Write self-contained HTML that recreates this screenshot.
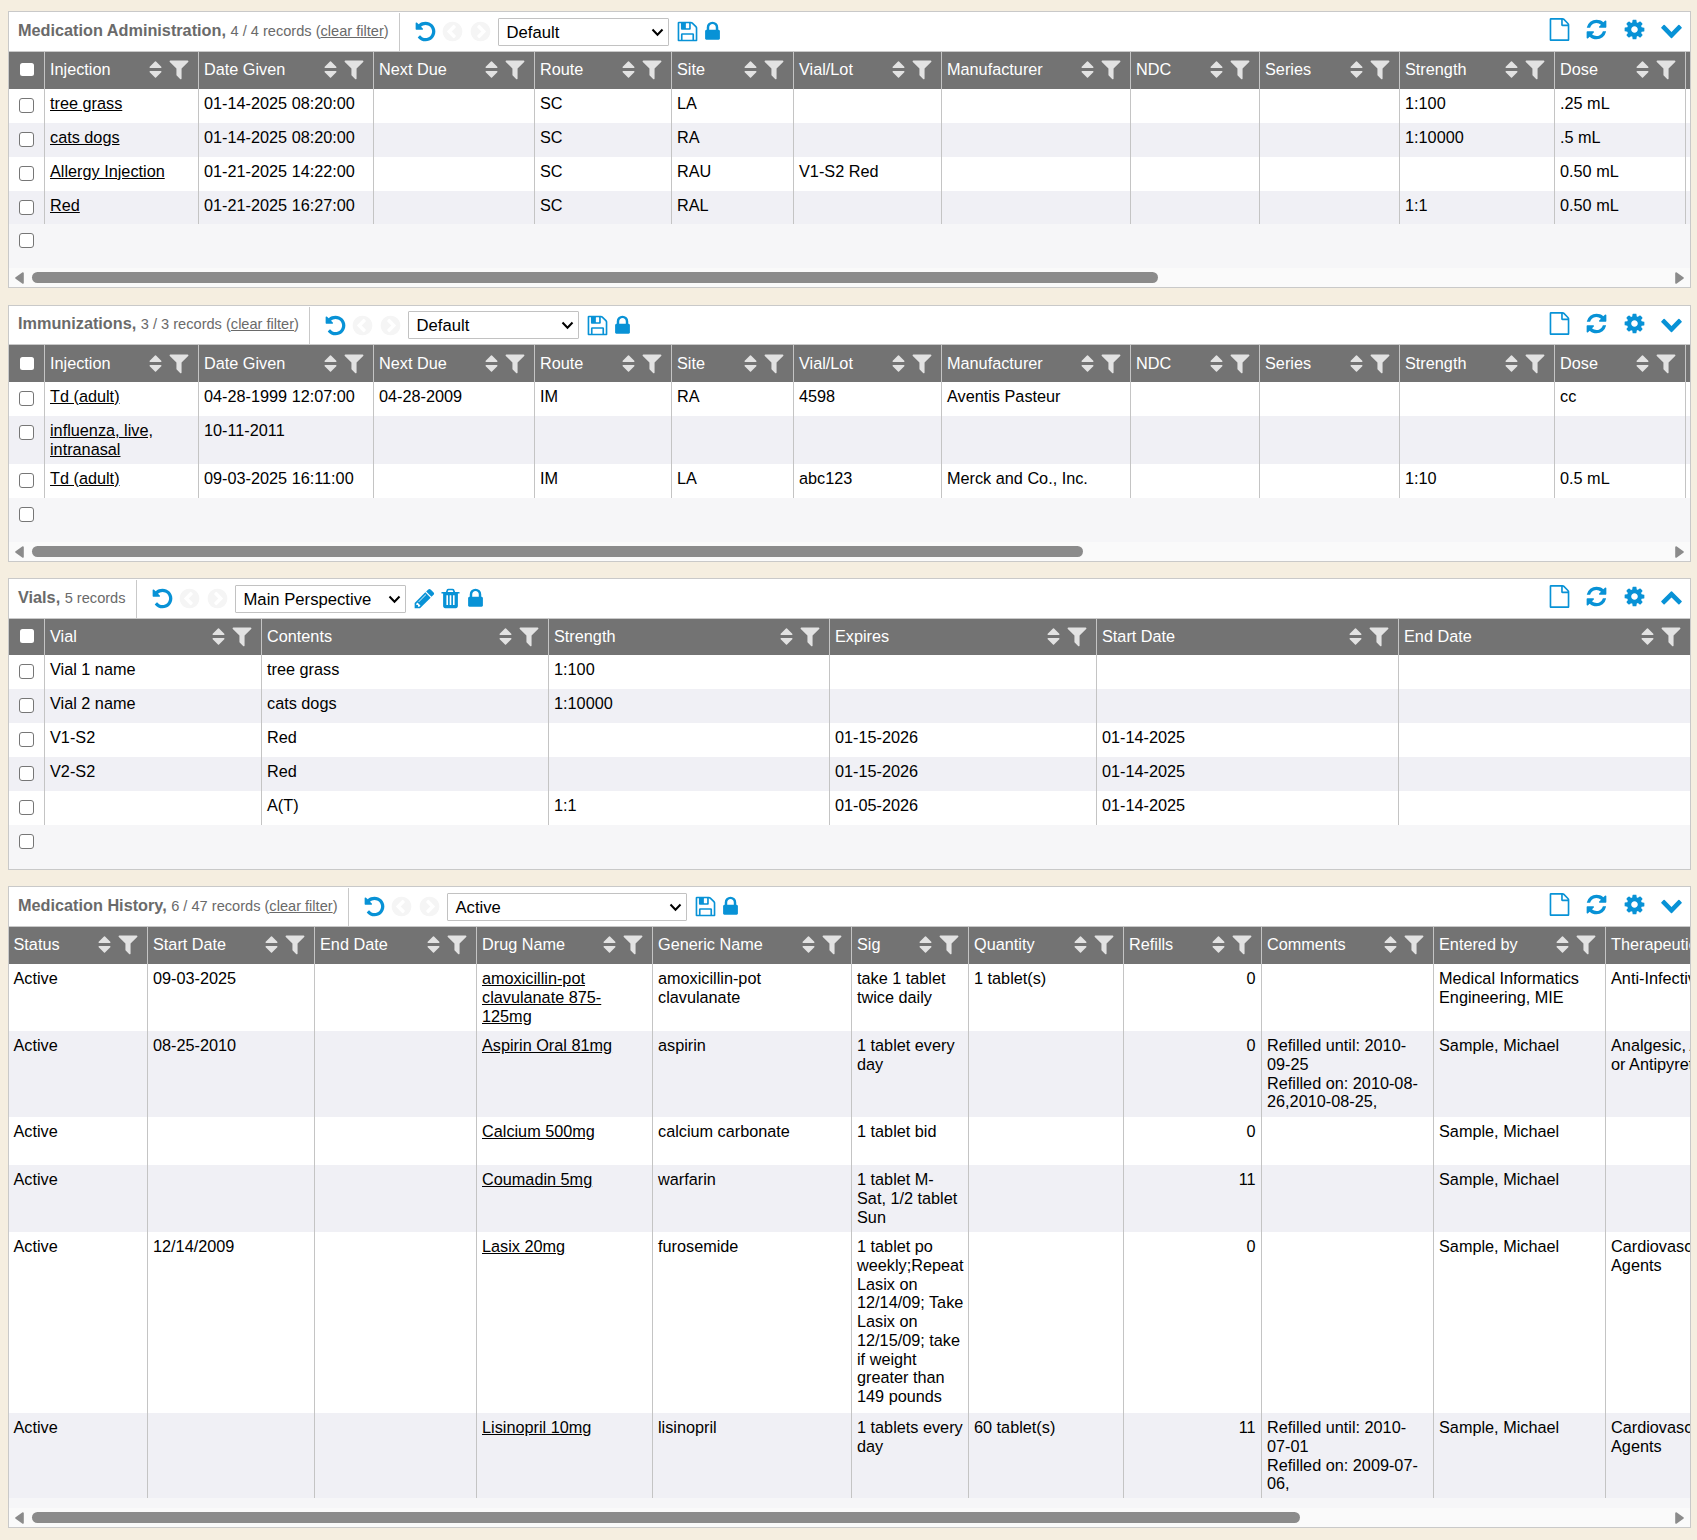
<!DOCTYPE html><html><head><meta charset="utf-8"><title>Chart</title><style>
html,body{margin:0;padding:0}
body{background:#f5eee0;font-family:"Liberation Sans",sans-serif;font-size:16.25px;line-height:18.75px;color:#000;width:1697px;height:1540px;overflow:hidden;position:relative}
.panel{position:absolute;left:8px;width:1681px;border:1px solid #c9c9c9;background:#fff;overflow:hidden}
.tb{position:relative;height:39px;border-bottom:1px solid #c9c9c9;box-sizing:content-box}
.tt{position:absolute;left:9px;top:9px;font-size:16.25px;font-weight:bold;color:#6a6a6a;white-space:nowrap;line-height:19px}
.tt span{font-weight:normal;font-size:14.6px;color:#6a6a6a}
.tt u{text-decoration:underline}
.vs{position:absolute;top:1px;height:38px;width:1px;background:#c9c9c9}
.i{position:absolute;display:block}
.sel{position:absolute;top:6px;height:28px;box-sizing:border-box;border:1px solid #c2c2c2;border-radius:1px;background:#fff;font-size:16.67px;line-height:27.6px;padding-left:7.5px;color:#000;white-space:nowrap}
.sel svg{position:absolute;right:4px;top:9px}
.tw{position:relative;overflow:hidden;width:1681px}
table{border-collapse:separate;border-spacing:0;table-layout:fixed}
th{background:#737373;color:#fff;font-weight:normal;text-align:left;height:37px;padding:0 0 2px 5px;border-left:1px solid #c4c4c4;box-sizing:border-box;position:relative;white-space:nowrap;overflow:hidden;vertical-align:middle}
th.c,td.c{border-left:none;padding:0;width:35px}
th.f,td.f{border-left:none;padding-left:4.5px}
td{white-space:nowrap;vertical-align:top;padding:5px 4px 4px 5px;border-left:1px solid #c4c4c4;box-sizing:border-box;overflow:hidden;word-wrap:break-word}
tbody tr{height:34px}
tr.o td{background:#fff}
tr.e td{background:#f0f0f5}
td a{color:#000;text-decoration:underline}
td.r{text-align:right;padding-right:5.5px}
.cb{display:block;width:12.6px;height:12.6px;border:1.2px solid #767676;border-radius:3px;background:#fff;margin:9.4px 0 0 10px}
th .cb{border:none;width:13.75px;height:13.75px;margin:0 0 0 10.75px;border-radius:2.5px}
.er{background:#f6f6f8;height:44px;display:flow-root}
.sb{position:absolute;left:0;right:0;bottom:0;height:19px;background:#fafafa}
.th{position:absolute;top:4px;height:11px;border-radius:6px;background:#8b8b8b;left:23px}
</style></head><body><div class="panel" style="top:11px;height:275px"><div class="tb" style="height:39px"><div class="tt" style="margin-top:0px">Medication Administration, <span>4 / 4 records (<u>clear filter</u>)</span></div><div class="vs" style="left:390px"></div><svg class="i" width="23" height="23" viewBox="0 0 1792 1792" style="left:404.7px;top:7.7px"><path fill="#0892d6" d="M1664 896q0 156-61 298t-164 245-245 164-298 61q-172 0-327-72.500t-264-204.500q-7-10-6.500-22.500t8.500-20.500l137-138q10-9 25-9 16 2 23 12 73 95 179 147t225 52q104 0 198.500-40.500t163.500-109.500 109.500-163.500 40.500-198.500-40.500-198.500-109.500-163.500-163.500-109.500-198.500-40.500q-98 0-188 35.500t-160 101.500l137 138q31 30 14 69-17 40-59 40h-448q-26 0-45-19t-19-45v-448q0-42 40-59 39-17 69 14l130 129q107-101 244.500-156.500t284.500-55.500q156 0 298 61t245 164 164 245 61 298z"/></svg><svg class="i" width="23" height="23" viewBox="0 0 1792 1792" style="left:431.7px;top:7.9px"><path fill="#f5f5f5" d="M1037 1395l102-102q19-19 19-45t-19-45l-307-307 307-307q19-19 19-45t-19-45l-102-102q-19-19-45-19t-45 19l-454 454q-19 19-19 45t19 45l454 454q19 19 45 19t45-19zm627-499q0 209-103 385.500t-279.500 279.500-385.500 103-385.500-103-279.500-279.500-103-385.500 103-385.500 279.500-279.500 385.500-103 385.500 103 279.500 279.500 103 385.500z"/></svg><svg class="i" width="23" height="23" viewBox="0 0 1792 1792" style="left:459.7px;top:7.9px"><path fill="#f5f5f5" d="M845 1395l454-454q19-19 19-45t-19-45l-454-454q-19-19-45-19t-45 19l-102 102q-19 19-19 45t19 45l307 307-307 307q-19 19-19 45t19 45l102 102q19 19 45 19t45-19zm819-499q0 209-103 385.500t-279.500 279.500-385.500 103-385.500-103-279.500-279.500-103-385.500 103-385.500 279.500-279.500 385.500-103 385.500 103 279.500 279.500 103 385.500z"/></svg><div class="sel" style="left:489px;width:171px;margin-top:0px">Default<svg width="13" height="9" viewBox="0 0 13 9"><path d="M1.5 1.5 L6.5 6.8 L11.5 1.5" fill="none" stroke="#000" stroke-width="2"/></svg></div><svg class="i" width="23" height="23" viewBox="0 0 1792 1792" style="left:667px;top:8px"><path fill="#0892d6" d="M512 1536h768v-384h-768v384zm896 0h128v-896q0-14-10-38.500t-20-34.500l-281-281q-10-10-34-20t-39-10v416q0 40-28 68t-68 28h-576q-40 0-68-28t-28-68v-416h-128v1280h128v-416q0-40 28-68t68-28h832q40 0 68 28t28 68v416zm-384-928v-320q0-13-9.500-22.500t-22.500-9.500h-192q-13 0-22.500 9.500t-9.500 22.500v320q0 13 9.500 22.500t22.500 9.500h192q13 0 22.500-9.500t9.500-22.500zm640 32v928q0 40-28 68t-68 28h-1344q-40 0-68-28t-28-68v-1344q0-40 28-68t68-28h928q40 0 88 20t76 48l280 280q28 28 48 76t20 88z"/></svg><svg class="i" width="23" height="23" viewBox="0 0 1792 1792" style="left:692px;top:8px"><path fill="#0892d6" d="M640 768h512v-192q0-106-75-181t-181-75-181 75-75 181v192zm832 96v576q0 40-28 68t-68 28h-960q-40 0-68-28t-28-68v-576q0-40 28-68t68-28h32v-192q0-184 132-316t316-132 316 132 132 316v192h32q40 0 68 28t28 68z"/></svg><svg class="i" width="23" height="23" viewBox="0 0 1792 1792" style="left:1538.9px;top:5.6px"><path fill="#0892d6" d="M1596 380q28 28 48 76t20 88v1152q0 40-28 68t-68 28h-1344q-40 0-68-28t-28-68v-1600q0-40 28-68t68-28h896q40 0 88 20t76 48zm-444-244v376h376q-10-29-22-41l-313-313q-12-12-41-22zm384 1528v-1024h-416q-40 0-68-28t-28-68v-416h-768v1536h1280z"/></svg><svg class="i" width="23" height="23" viewBox="0 0 1792 1792" style="left:1575.7px;top:5.6px"><path fill="#0892d6" d="M1639 1056q0 5-1 7-64 268-268 434.500t-478 166.500q-146 0-282.500-55t-243.500-157l-129 129q-19 19-45 19t-45-19-19-45v-448q0-26 19-45t45-19h448q26 0 45 19t19 45-19 45l-137 137q71 66 161 102t187 36q134 0 250-65t186-179q11-17 53-117 8-23 30-23h192q13 0 22.500 9.500t9.500 22.500zm25-800v448q0 26-19 45t-45 19h-448q-26 0-45-19t-19-45 19-45l138-138q-148-137-349-137-134 0-250 65t-186 179q-11 17-53 117-8 23-30 23h-199q-13 0-22.500-9.500t-9.500-22.500v-7q65-268 270-434.500t480-166.500q146 0 284 55.500t245 156.500l130-129q19-19 45-19t45 19 19 45z"/></svg><svg class="i" width="23" height="23" viewBox="0 0 1792 1792" style="left:1614.1px;top:5.6px"><path fill="#0892d6" d="M1152 896q0-106-75-181t-181-75-181 75-75 181 75 181 181 75 181-75 75-181zm512-109v222q0 12-8 23t-20 13l-185 28q-19 54-39 91 35 50 107 138 10 12 10 25t-9 23q-27 37-99 108t-94 71q-12 0-26-9l-138-108q-44 23-91 38-16 136-29 186-7 28-36 28h-222q-14 0-24.500-8.500t-11.500-21.500l-28-184q-49-16-90-37l-141 107q-10 9-25 9-14 0-25-11-126-114-165-168-7-10-7-23 0-12 8-23 15-21 51-66.500t54-70.500q-27-50-41-99l-183-27q-13-2-21-12.500t-8-23.500v-222q0-12 8-23t19-13l186-28q14-46 39-92-40-57-107-138-10-12-10-24 0-10 9-23 26-36 98.500-107.500t94.500-71.500q13 0 26 10l138 107q44-23 91-38 16-136 29-186 7-28 36-28h222q14 0 24.500 8.500t11.500 21.500l28 184q49 16 90 37l142-107q9-9 24-9 13 0 25 10 129 119 165 170 7 8 7 22 0 12-8 23-15 21-51 66.500t-54 70.500q26 50 41 98l183 28q13 2 21 12.500t8 23.500z"/></svg><svg class="i" width="23" height="23" viewBox="0 0 1792 1792" style="left:1651.1px;top:5.6px"><path fill="#0892d6" d="M1683 808l-742 741q-19 19-45 19t-45-19l-742-741q-19-19-19-45.500t19-45.500l166-165q19-19 45-19t45 19l531 531 531-531q19-19 45-19t45 19l166 165q19 19 19 45.500t-19 45.500z"/></svg></div><div class="tw"><table style="width:1796px"><thead><tr><th class="c" style="height:37px;padding-bottom:2px"><span class="cb"></span></th><th style="width:154px;height:37px;padding-bottom:2px">Injection<svg class="i" width="21" height="21" viewBox="0 0 1792 1792" style="right:32px;top:7px"><path fill="#e2e2e2" d="M1408 1088q0 26-19 45l-448 448q-19 19-45 19t-45-19l-448-448q-19-19-19-45t19-45 45-19h896q26 0 45 19t19 45zm0-384q0 26-19 45t-45 19h-896q-26 0-45-19t-19-45 19-45l448-448q19-19 45-19t45 19l448 448q19 19 19 45z"/></svg><svg class="i" width="24" height="24" viewBox="0 0 1792 1792" style="right:7.3px;top:4.6px"><path fill="#e2e2e2" d="M1595 295q17 41-14 70l-493 493v742q0 42-39 59-13 5-25 5-27 0-45-19l-256-256q-19-19-19-45v-486l-493-493q-31-29-14-70 17-39 59-39h1280q42 0 59 39z"/></svg></th><th style="width:175px;height:37px;padding-bottom:2px">Date Given<svg class="i" width="21" height="21" viewBox="0 0 1792 1792" style="right:32px;top:7px"><path fill="#e2e2e2" d="M1408 1088q0 26-19 45l-448 448q-19 19-45 19t-45-19l-448-448q-19-19-19-45t19-45 45-19h896q26 0 45 19t19 45zm0-384q0 26-19 45t-45 19h-896q-26 0-45-19t-19-45 19-45l448-448q19-19 45-19t45 19l448 448q19 19 19 45z"/></svg><svg class="i" width="24" height="24" viewBox="0 0 1792 1792" style="right:7.3px;top:4.6px"><path fill="#e2e2e2" d="M1595 295q17 41-14 70l-493 493v742q0 42-39 59-13 5-25 5-27 0-45-19l-256-256q-19-19-19-45v-486l-493-493q-31-29-14-70 17-39 59-39h1280q42 0 59 39z"/></svg></th><th style="width:161px;height:37px;padding-bottom:2px">Next Due<svg class="i" width="21" height="21" viewBox="0 0 1792 1792" style="right:32px;top:7px"><path fill="#e2e2e2" d="M1408 1088q0 26-19 45l-448 448q-19 19-45 19t-45-19l-448-448q-19-19-19-45t19-45 45-19h896q26 0 45 19t19 45zm0-384q0 26-19 45t-45 19h-896q-26 0-45-19t-19-45 19-45l448-448q19-19 45-19t45 19l448 448q19 19 19 45z"/></svg><svg class="i" width="24" height="24" viewBox="0 0 1792 1792" style="right:7.3px;top:4.6px"><path fill="#e2e2e2" d="M1595 295q17 41-14 70l-493 493v742q0 42-39 59-13 5-25 5-27 0-45-19l-256-256q-19-19-19-45v-486l-493-493q-31-29-14-70 17-39 59-39h1280q42 0 59 39z"/></svg></th><th style="width:137px;height:37px;padding-bottom:2px">Route<svg class="i" width="21" height="21" viewBox="0 0 1792 1792" style="right:32px;top:7px"><path fill="#e2e2e2" d="M1408 1088q0 26-19 45l-448 448q-19 19-45 19t-45-19l-448-448q-19-19-19-45t19-45 45-19h896q26 0 45 19t19 45zm0-384q0 26-19 45t-45 19h-896q-26 0-45-19t-19-45 19-45l448-448q19-19 45-19t45 19l448 448q19 19 19 45z"/></svg><svg class="i" width="24" height="24" viewBox="0 0 1792 1792" style="right:7.3px;top:4.6px"><path fill="#e2e2e2" d="M1595 295q17 41-14 70l-493 493v742q0 42-39 59-13 5-25 5-27 0-45-19l-256-256q-19-19-19-45v-486l-493-493q-31-29-14-70 17-39 59-39h1280q42 0 59 39z"/></svg></th><th style="width:122px;height:37px;padding-bottom:2px">Site<svg class="i" width="21" height="21" viewBox="0 0 1792 1792" style="right:32px;top:7px"><path fill="#e2e2e2" d="M1408 1088q0 26-19 45l-448 448q-19 19-45 19t-45-19l-448-448q-19-19-19-45t19-45 45-19h896q26 0 45 19t19 45zm0-384q0 26-19 45t-45 19h-896q-26 0-45-19t-19-45 19-45l448-448q19-19 45-19t45 19l448 448q19 19 19 45z"/></svg><svg class="i" width="24" height="24" viewBox="0 0 1792 1792" style="right:7.3px;top:4.6px"><path fill="#e2e2e2" d="M1595 295q17 41-14 70l-493 493v742q0 42-39 59-13 5-25 5-27 0-45-19l-256-256q-19-19-19-45v-486l-493-493q-31-29-14-70 17-39 59-39h1280q42 0 59 39z"/></svg></th><th style="width:148px;height:37px;padding-bottom:2px">Vial/Lot<svg class="i" width="21" height="21" viewBox="0 0 1792 1792" style="right:32px;top:7px"><path fill="#e2e2e2" d="M1408 1088q0 26-19 45l-448 448q-19 19-45 19t-45-19l-448-448q-19-19-19-45t19-45 45-19h896q26 0 45 19t19 45zm0-384q0 26-19 45t-45 19h-896q-26 0-45-19t-19-45 19-45l448-448q19-19 45-19t45 19l448 448q19 19 19 45z"/></svg><svg class="i" width="24" height="24" viewBox="0 0 1792 1792" style="right:7.3px;top:4.6px"><path fill="#e2e2e2" d="M1595 295q17 41-14 70l-493 493v742q0 42-39 59-13 5-25 5-27 0-45-19l-256-256q-19-19-19-45v-486l-493-493q-31-29-14-70 17-39 59-39h1280q42 0 59 39z"/></svg></th><th style="width:189px;height:37px;padding-bottom:2px">Manufacturer<svg class="i" width="21" height="21" viewBox="0 0 1792 1792" style="right:32px;top:7px"><path fill="#e2e2e2" d="M1408 1088q0 26-19 45l-448 448q-19 19-45 19t-45-19l-448-448q-19-19-19-45t19-45 45-19h896q26 0 45 19t19 45zm0-384q0 26-19 45t-45 19h-896q-26 0-45-19t-19-45 19-45l448-448q19-19 45-19t45 19l448 448q19 19 19 45z"/></svg><svg class="i" width="24" height="24" viewBox="0 0 1792 1792" style="right:7.3px;top:4.6px"><path fill="#e2e2e2" d="M1595 295q17 41-14 70l-493 493v742q0 42-39 59-13 5-25 5-27 0-45-19l-256-256q-19-19-19-45v-486l-493-493q-31-29-14-70 17-39 59-39h1280q42 0 59 39z"/></svg></th><th style="width:129px;height:37px;padding-bottom:2px">NDC<svg class="i" width="21" height="21" viewBox="0 0 1792 1792" style="right:32px;top:7px"><path fill="#e2e2e2" d="M1408 1088q0 26-19 45l-448 448q-19 19-45 19t-45-19l-448-448q-19-19-19-45t19-45 45-19h896q26 0 45 19t19 45zm0-384q0 26-19 45t-45 19h-896q-26 0-45-19t-19-45 19-45l448-448q19-19 45-19t45 19l448 448q19 19 19 45z"/></svg><svg class="i" width="24" height="24" viewBox="0 0 1792 1792" style="right:7.3px;top:4.6px"><path fill="#e2e2e2" d="M1595 295q17 41-14 70l-493 493v742q0 42-39 59-13 5-25 5-27 0-45-19l-256-256q-19-19-19-45v-486l-493-493q-31-29-14-70 17-39 59-39h1280q42 0 59 39z"/></svg></th><th style="width:140px;height:37px;padding-bottom:2px">Series<svg class="i" width="21" height="21" viewBox="0 0 1792 1792" style="right:32px;top:7px"><path fill="#e2e2e2" d="M1408 1088q0 26-19 45l-448 448q-19 19-45 19t-45-19l-448-448q-19-19-19-45t19-45 45-19h896q26 0 45 19t19 45zm0-384q0 26-19 45t-45 19h-896q-26 0-45-19t-19-45 19-45l448-448q19-19 45-19t45 19l448 448q19 19 19 45z"/></svg><svg class="i" width="24" height="24" viewBox="0 0 1792 1792" style="right:7.3px;top:4.6px"><path fill="#e2e2e2" d="M1595 295q17 41-14 70l-493 493v742q0 42-39 59-13 5-25 5-27 0-45-19l-256-256q-19-19-19-45v-486l-493-493q-31-29-14-70 17-39 59-39h1280q42 0 59 39z"/></svg></th><th style="width:155px;height:37px;padding-bottom:2px">Strength<svg class="i" width="21" height="21" viewBox="0 0 1792 1792" style="right:32px;top:7px"><path fill="#e2e2e2" d="M1408 1088q0 26-19 45l-448 448q-19 19-45 19t-45-19l-448-448q-19-19-19-45t19-45 45-19h896q26 0 45 19t19 45zm0-384q0 26-19 45t-45 19h-896q-26 0-45-19t-19-45 19-45l448-448q19-19 45-19t45 19l448 448q19 19 19 45z"/></svg><svg class="i" width="24" height="24" viewBox="0 0 1792 1792" style="right:7.3px;top:4.6px"><path fill="#e2e2e2" d="M1595 295q17 41-14 70l-493 493v742q0 42-39 59-13 5-25 5-27 0-45-19l-256-256q-19-19-19-45v-486l-493-493q-31-29-14-70 17-39 59-39h1280q42 0 59 39z"/></svg></th><th style="width:131px;height:37px;padding-bottom:2px">Dose<svg class="i" width="21" height="21" viewBox="0 0 1792 1792" style="right:32px;top:7px"><path fill="#e2e2e2" d="M1408 1088q0 26-19 45l-448 448q-19 19-45 19t-45-19l-448-448q-19-19-19-45t19-45 45-19h896q26 0 45 19t19 45zm0-384q0 26-19 45t-45 19h-896q-26 0-45-19t-19-45 19-45l448-448q19-19 45-19t45 19l448 448q19 19 19 45z"/></svg><svg class="i" width="24" height="24" viewBox="0 0 1792 1792" style="right:7.3px;top:4.6px"><path fill="#e2e2e2" d="M1595 295q17 41-14 70l-493 493v742q0 42-39 59-13 5-25 5-27 0-45-19l-256-256q-19-19-19-45v-486l-493-493q-31-29-14-70 17-39 59-39h1280q42 0 59 39z"/></svg></th><th style="width:120px;height:37px;padding-bottom:2px">Units<svg class="i" width="21" height="21" viewBox="0 0 1792 1792" style="right:32px;top:7px"><path fill="#e2e2e2" d="M1408 1088q0 26-19 45l-448 448q-19 19-45 19t-45-19l-448-448q-19-19-19-45t19-45 45-19h896q26 0 45 19t19 45zm0-384q0 26-19 45t-45 19h-896q-26 0-45-19t-19-45 19-45l448-448q19-19 45-19t45 19l448 448q19 19 19 45z"/></svg><svg class="i" width="24" height="24" viewBox="0 0 1792 1792" style="right:7.3px;top:4.6px"><path fill="#e2e2e2" d="M1595 295q17 41-14 70l-493 493v742q0 42-39 59-13 5-25 5-27 0-45-19l-256-256q-19-19-19-45v-486l-493-493q-31-29-14-70 17-39 59-39h1280q42 0 59 39z"/></svg></th></tr></thead><tbody><tr class="o" style="height:34px"><td class="c"><span class="cb"></span></td><td><a>tree grass</a></td><td>01-14-2025 08:20:00</td><td></td><td>SC</td><td>LA</td><td></td><td></td><td></td><td></td><td>1:100</td><td>.25 mL</td><td></td></tr><tr class="e" style="height:34px"><td class="c"><span class="cb"></span></td><td><a>cats dogs</a></td><td>01-14-2025 08:20:00</td><td></td><td>SC</td><td>RA</td><td></td><td></td><td></td><td></td><td>1:10000</td><td>.5 mL</td><td></td></tr><tr class="o" style="height:34px"><td class="c"><span class="cb"></span></td><td><a>Allergy Injection</a></td><td>01-21-2025 14:22:00</td><td></td><td>SC</td><td>RAU</td><td>V1-S2 Red</td><td></td><td></td><td></td><td></td><td>0.50 mL</td><td></td></tr><tr class="e" style="height:33px"><td class="c"><span class="cb"></span></td><td><a>Red</a></td><td>01-21-2025 16:27:00</td><td></td><td>SC</td><td>RAL</td><td></td><td></td><td></td><td></td><td>1:1</td><td>0.50 mL</td><td></td></tr></tbody></table><div class="er"><span class="cb" style="margin-top:9px"></span></div></div><div class="sb"><svg class="i" style="left:6px;top:4px" width="9" height="12" viewBox="0 0 9 12"><path d="M7.8 1.2 L1.2 6 L7.8 10.8 Z" fill="#8b8b8b" stroke="#8b8b8b" stroke-width="2" stroke-linejoin="round"/></svg><div class="th" style="width:1126px"></div><svg class="i" style="right:6px;top:4px" width="9" height="12" viewBox="0 0 9 12"><path d="M1.2 1.2 L7.8 6 L1.2 10.8 Z" fill="#8b8b8b" stroke="#8b8b8b" stroke-width="2" stroke-linejoin="round"/></svg></div></div><div class="panel" style="top:305px;height:255px"><div class="tb" style="height:38px"><div class="tt" style="margin-top:-0.75px">Immunizations, <span>3 / 3 records (<u>clear filter</u>)</span></div><div class="vs" style="left:300px"></div><svg class="i" width="23" height="23" viewBox="0 0 1792 1792" style="left:314.7px;top:7.7px"><path fill="#0892d6" d="M1664 896q0 156-61 298t-164 245-245 164-298 61q-172 0-327-72.500t-264-204.500q-7-10-6.500-22.500t8.500-20.500l137-138q10-9 25-9 16 2 23 12 73 95 179 147t225 52q104 0 198.500-40.500t163.500-109.500 109.500-163.500 40.500-198.500-40.500-198.500-109.500-163.500-163.500-109.500-198.500-40.500q-98 0-188 35.500t-160 101.500l137 138q31 30 14 69-17 40-59 40h-448q-26 0-45-19t-19-45v-448q0-42 40-59 39-17 69 14l130 129q107-101 244.500-156.500t284.500-55.500q156 0 298 61t245 164 164 245 61 298z"/></svg><svg class="i" width="23" height="23" viewBox="0 0 1792 1792" style="left:341.7px;top:7.9px"><path fill="#f5f5f5" d="M1037 1395l102-102q19-19 19-45t-19-45l-307-307 307-307q19-19 19-45t-19-45l-102-102q-19-19-45-19t-45 19l-454 454q-19 19-19 45t19 45l454 454q19 19 45 19t45-19zm627-499q0 209-103 385.500t-279.500 279.500-385.500 103-385.500-103-279.500-279.500-103-385.500 103-385.500 279.500-279.500 385.500-103 385.500 103 279.500 279.500 103 385.500z"/></svg><svg class="i" width="23" height="23" viewBox="0 0 1792 1792" style="left:369.7px;top:7.9px"><path fill="#f5f5f5" d="M845 1395l454-454q19-19 19-45t-19-45l-454-454q-19-19-45-19t-45 19l-102 102q-19 19-19 45t19 45l307 307-307 307q-19 19-19 45t19 45l102 102q19 19 45 19t45-19zm819-499q0 209-103 385.500t-279.500 279.500-385.500 103-385.500-103-279.500-279.500-103-385.500 103-385.500 279.500-279.500 385.500-103 385.500 103 279.500 279.500 103 385.500z"/></svg><div class="sel" style="left:399px;width:171px;margin-top:-0.75px">Default<svg width="13" height="9" viewBox="0 0 13 9"><path d="M1.5 1.5 L6.5 6.8 L11.5 1.5" fill="none" stroke="#000" stroke-width="2"/></svg></div><svg class="i" width="23" height="23" viewBox="0 0 1792 1792" style="left:577px;top:8px"><path fill="#0892d6" d="M512 1536h768v-384h-768v384zm896 0h128v-896q0-14-10-38.500t-20-34.500l-281-281q-10-10-34-20t-39-10v416q0 40-28 68t-68 28h-576q-40 0-68-28t-28-68v-416h-128v1280h128v-416q0-40 28-68t68-28h832q40 0 68 28t28 68v416zm-384-928v-320q0-13-9.500-22.500t-22.500-9.500h-192q-13 0-22.500 9.500t-9.500 22.500v320q0 13 9.500 22.500t22.500 9.500h192q13 0 22.500-9.500t9.500-22.500zm640 32v928q0 40-28 68t-68 28h-1344q-40 0-68-28t-28-68v-1344q0-40 28-68t68-28h928q40 0 88 20t76 48l280 280q28 28 48 76t20 88z"/></svg><svg class="i" width="23" height="23" viewBox="0 0 1792 1792" style="left:602px;top:8px"><path fill="#0892d6" d="M640 768h512v-192q0-106-75-181t-181-75-181 75-75 181v192zm832 96v576q0 40-28 68t-68 28h-960q-40 0-68-28t-28-68v-576q0-40 28-68t68-28h32v-192q0-184 132-316t316-132 316 132 132 316v192h32q40 0 68 28t28 68z"/></svg><svg class="i" width="23" height="23" viewBox="0 0 1792 1792" style="left:1538.9px;top:5.6px"><path fill="#0892d6" d="M1596 380q28 28 48 76t20 88v1152q0 40-28 68t-68 28h-1344q-40 0-68-28t-28-68v-1600q0-40 28-68t68-28h896q40 0 88 20t76 48zm-444-244v376h376q-10-29-22-41l-313-313q-12-12-41-22zm384 1528v-1024h-416q-40 0-68-28t-28-68v-416h-768v1536h1280z"/></svg><svg class="i" width="23" height="23" viewBox="0 0 1792 1792" style="left:1575.7px;top:5.6px"><path fill="#0892d6" d="M1639 1056q0 5-1 7-64 268-268 434.500t-478 166.500q-146 0-282.500-55t-243.500-157l-129 129q-19 19-45 19t-45-19-19-45v-448q0-26 19-45t45-19h448q26 0 45 19t19 45-19 45l-137 137q71 66 161 102t187 36q134 0 250-65t186-179q11-17 53-117 8-23 30-23h192q13 0 22.500 9.500t9.500 22.500zm25-800v448q0 26-19 45t-45 19h-448q-26 0-45-19t-19-45 19-45l138-138q-148-137-349-137-134 0-250 65t-186 179q-11 17-53 117-8 23-30 23h-199q-13 0-22.500-9.500t-9.500-22.500v-7q65-268 270-434.500t480-166.500q146 0 284 55.500t245 156.500l130-129q19-19 45-19t45 19 19 45z"/></svg><svg class="i" width="23" height="23" viewBox="0 0 1792 1792" style="left:1614.1px;top:5.6px"><path fill="#0892d6" d="M1152 896q0-106-75-181t-181-75-181 75-75 181 75 181 181 75 181-75 75-181zm512-109v222q0 12-8 23t-20 13l-185 28q-19 54-39 91 35 50 107 138 10 12 10 25t-9 23q-27 37-99 108t-94 71q-12 0-26-9l-138-108q-44 23-91 38-16 136-29 186-7 28-36 28h-222q-14 0-24.500-8.500t-11.500-21.500l-28-184q-49-16-90-37l-141 107q-10 9-25 9-14 0-25-11-126-114-165-168-7-10-7-23 0-12 8-23 15-21 51-66.500t54-70.500q-27-50-41-99l-183-27q-13-2-21-12.500t-8-23.500v-222q0-12 8-23t19-13l186-28q14-46 39-92-40-57-107-138-10-12-10-24 0-10 9-23 26-36 98.500-107.500t94.500-71.500q13 0 26 10l138 107q44-23 91-38 16-136 29-186 7-28 36-28h222q14 0 24.500 8.500t11.500 21.500l28 184q49 16 90 37l142-107q9-9 24-9 13 0 25 10 129 119 165 170 7 8 7 22 0 12-8 23-15 21-51 66.500t-54 70.500q26 50 41 98l183 28q13 2 21 12.500t8 23.500z"/></svg><svg class="i" width="23" height="23" viewBox="0 0 1792 1792" style="left:1651.1px;top:5.6px"><path fill="#0892d6" d="M1683 808l-742 741q-19 19-45 19t-45-19l-742-741q-19-19-19-45.500t19-45.500l166-165q19-19 45-19t45 19l531 531 531-531q19-19 45-19t45 19l166 165q19 19 19 45.500t-19 45.500z"/></svg></div><div class="tw"><table style="width:1796px"><thead><tr><th class="c" style="height:37px;padding-bottom:0px"><span class="cb"></span></th><th style="width:154px;height:37px;padding-bottom:0px">Injection<svg class="i" width="21" height="21" viewBox="0 0 1792 1792" style="right:32px;top:8px"><path fill="#e2e2e2" d="M1408 1088q0 26-19 45l-448 448q-19 19-45 19t-45-19l-448-448q-19-19-19-45t19-45 45-19h896q26 0 45 19t19 45zm0-384q0 26-19 45t-45 19h-896q-26 0-45-19t-19-45 19-45l448-448q19-19 45-19t45 19l448 448q19 19 19 45z"/></svg><svg class="i" width="24" height="24" viewBox="0 0 1792 1792" style="right:7.3px;top:5.6px"><path fill="#e2e2e2" d="M1595 295q17 41-14 70l-493 493v742q0 42-39 59-13 5-25 5-27 0-45-19l-256-256q-19-19-19-45v-486l-493-493q-31-29-14-70 17-39 59-39h1280q42 0 59 39z"/></svg></th><th style="width:175px;height:37px;padding-bottom:0px">Date Given<svg class="i" width="21" height="21" viewBox="0 0 1792 1792" style="right:32px;top:8px"><path fill="#e2e2e2" d="M1408 1088q0 26-19 45l-448 448q-19 19-45 19t-45-19l-448-448q-19-19-19-45t19-45 45-19h896q26 0 45 19t19 45zm0-384q0 26-19 45t-45 19h-896q-26 0-45-19t-19-45 19-45l448-448q19-19 45-19t45 19l448 448q19 19 19 45z"/></svg><svg class="i" width="24" height="24" viewBox="0 0 1792 1792" style="right:7.3px;top:5.6px"><path fill="#e2e2e2" d="M1595 295q17 41-14 70l-493 493v742q0 42-39 59-13 5-25 5-27 0-45-19l-256-256q-19-19-19-45v-486l-493-493q-31-29-14-70 17-39 59-39h1280q42 0 59 39z"/></svg></th><th style="width:161px;height:37px;padding-bottom:0px">Next Due<svg class="i" width="21" height="21" viewBox="0 0 1792 1792" style="right:32px;top:8px"><path fill="#e2e2e2" d="M1408 1088q0 26-19 45l-448 448q-19 19-45 19t-45-19l-448-448q-19-19-19-45t19-45 45-19h896q26 0 45 19t19 45zm0-384q0 26-19 45t-45 19h-896q-26 0-45-19t-19-45 19-45l448-448q19-19 45-19t45 19l448 448q19 19 19 45z"/></svg><svg class="i" width="24" height="24" viewBox="0 0 1792 1792" style="right:7.3px;top:5.6px"><path fill="#e2e2e2" d="M1595 295q17 41-14 70l-493 493v742q0 42-39 59-13 5-25 5-27 0-45-19l-256-256q-19-19-19-45v-486l-493-493q-31-29-14-70 17-39 59-39h1280q42 0 59 39z"/></svg></th><th style="width:137px;height:37px;padding-bottom:0px">Route<svg class="i" width="21" height="21" viewBox="0 0 1792 1792" style="right:32px;top:8px"><path fill="#e2e2e2" d="M1408 1088q0 26-19 45l-448 448q-19 19-45 19t-45-19l-448-448q-19-19-19-45t19-45 45-19h896q26 0 45 19t19 45zm0-384q0 26-19 45t-45 19h-896q-26 0-45-19t-19-45 19-45l448-448q19-19 45-19t45 19l448 448q19 19 19 45z"/></svg><svg class="i" width="24" height="24" viewBox="0 0 1792 1792" style="right:7.3px;top:5.6px"><path fill="#e2e2e2" d="M1595 295q17 41-14 70l-493 493v742q0 42-39 59-13 5-25 5-27 0-45-19l-256-256q-19-19-19-45v-486l-493-493q-31-29-14-70 17-39 59-39h1280q42 0 59 39z"/></svg></th><th style="width:122px;height:37px;padding-bottom:0px">Site<svg class="i" width="21" height="21" viewBox="0 0 1792 1792" style="right:32px;top:8px"><path fill="#e2e2e2" d="M1408 1088q0 26-19 45l-448 448q-19 19-45 19t-45-19l-448-448q-19-19-19-45t19-45 45-19h896q26 0 45 19t19 45zm0-384q0 26-19 45t-45 19h-896q-26 0-45-19t-19-45 19-45l448-448q19-19 45-19t45 19l448 448q19 19 19 45z"/></svg><svg class="i" width="24" height="24" viewBox="0 0 1792 1792" style="right:7.3px;top:5.6px"><path fill="#e2e2e2" d="M1595 295q17 41-14 70l-493 493v742q0 42-39 59-13 5-25 5-27 0-45-19l-256-256q-19-19-19-45v-486l-493-493q-31-29-14-70 17-39 59-39h1280q42 0 59 39z"/></svg></th><th style="width:148px;height:37px;padding-bottom:0px">Vial/Lot<svg class="i" width="21" height="21" viewBox="0 0 1792 1792" style="right:32px;top:8px"><path fill="#e2e2e2" d="M1408 1088q0 26-19 45l-448 448q-19 19-45 19t-45-19l-448-448q-19-19-19-45t19-45 45-19h896q26 0 45 19t19 45zm0-384q0 26-19 45t-45 19h-896q-26 0-45-19t-19-45 19-45l448-448q19-19 45-19t45 19l448 448q19 19 19 45z"/></svg><svg class="i" width="24" height="24" viewBox="0 0 1792 1792" style="right:7.3px;top:5.6px"><path fill="#e2e2e2" d="M1595 295q17 41-14 70l-493 493v742q0 42-39 59-13 5-25 5-27 0-45-19l-256-256q-19-19-19-45v-486l-493-493q-31-29-14-70 17-39 59-39h1280q42 0 59 39z"/></svg></th><th style="width:189px;height:37px;padding-bottom:0px">Manufacturer<svg class="i" width="21" height="21" viewBox="0 0 1792 1792" style="right:32px;top:8px"><path fill="#e2e2e2" d="M1408 1088q0 26-19 45l-448 448q-19 19-45 19t-45-19l-448-448q-19-19-19-45t19-45 45-19h896q26 0 45 19t19 45zm0-384q0 26-19 45t-45 19h-896q-26 0-45-19t-19-45 19-45l448-448q19-19 45-19t45 19l448 448q19 19 19 45z"/></svg><svg class="i" width="24" height="24" viewBox="0 0 1792 1792" style="right:7.3px;top:5.6px"><path fill="#e2e2e2" d="M1595 295q17 41-14 70l-493 493v742q0 42-39 59-13 5-25 5-27 0-45-19l-256-256q-19-19-19-45v-486l-493-493q-31-29-14-70 17-39 59-39h1280q42 0 59 39z"/></svg></th><th style="width:129px;height:37px;padding-bottom:0px">NDC<svg class="i" width="21" height="21" viewBox="0 0 1792 1792" style="right:32px;top:8px"><path fill="#e2e2e2" d="M1408 1088q0 26-19 45l-448 448q-19 19-45 19t-45-19l-448-448q-19-19-19-45t19-45 45-19h896q26 0 45 19t19 45zm0-384q0 26-19 45t-45 19h-896q-26 0-45-19t-19-45 19-45l448-448q19-19 45-19t45 19l448 448q19 19 19 45z"/></svg><svg class="i" width="24" height="24" viewBox="0 0 1792 1792" style="right:7.3px;top:5.6px"><path fill="#e2e2e2" d="M1595 295q17 41-14 70l-493 493v742q0 42-39 59-13 5-25 5-27 0-45-19l-256-256q-19-19-19-45v-486l-493-493q-31-29-14-70 17-39 59-39h1280q42 0 59 39z"/></svg></th><th style="width:140px;height:37px;padding-bottom:0px">Series<svg class="i" width="21" height="21" viewBox="0 0 1792 1792" style="right:32px;top:8px"><path fill="#e2e2e2" d="M1408 1088q0 26-19 45l-448 448q-19 19-45 19t-45-19l-448-448q-19-19-19-45t19-45 45-19h896q26 0 45 19t19 45zm0-384q0 26-19 45t-45 19h-896q-26 0-45-19t-19-45 19-45l448-448q19-19 45-19t45 19l448 448q19 19 19 45z"/></svg><svg class="i" width="24" height="24" viewBox="0 0 1792 1792" style="right:7.3px;top:5.6px"><path fill="#e2e2e2" d="M1595 295q17 41-14 70l-493 493v742q0 42-39 59-13 5-25 5-27 0-45-19l-256-256q-19-19-19-45v-486l-493-493q-31-29-14-70 17-39 59-39h1280q42 0 59 39z"/></svg></th><th style="width:155px;height:37px;padding-bottom:0px">Strength<svg class="i" width="21" height="21" viewBox="0 0 1792 1792" style="right:32px;top:8px"><path fill="#e2e2e2" d="M1408 1088q0 26-19 45l-448 448q-19 19-45 19t-45-19l-448-448q-19-19-19-45t19-45 45-19h896q26 0 45 19t19 45zm0-384q0 26-19 45t-45 19h-896q-26 0-45-19t-19-45 19-45l448-448q19-19 45-19t45 19l448 448q19 19 19 45z"/></svg><svg class="i" width="24" height="24" viewBox="0 0 1792 1792" style="right:7.3px;top:5.6px"><path fill="#e2e2e2" d="M1595 295q17 41-14 70l-493 493v742q0 42-39 59-13 5-25 5-27 0-45-19l-256-256q-19-19-19-45v-486l-493-493q-31-29-14-70 17-39 59-39h1280q42 0 59 39z"/></svg></th><th style="width:131px;height:37px;padding-bottom:0px">Dose<svg class="i" width="21" height="21" viewBox="0 0 1792 1792" style="right:32px;top:8px"><path fill="#e2e2e2" d="M1408 1088q0 26-19 45l-448 448q-19 19-45 19t-45-19l-448-448q-19-19-19-45t19-45 45-19h896q26 0 45 19t19 45zm0-384q0 26-19 45t-45 19h-896q-26 0-45-19t-19-45 19-45l448-448q19-19 45-19t45 19l448 448q19 19 19 45z"/></svg><svg class="i" width="24" height="24" viewBox="0 0 1792 1792" style="right:7.3px;top:5.6px"><path fill="#e2e2e2" d="M1595 295q17 41-14 70l-493 493v742q0 42-39 59-13 5-25 5-27 0-45-19l-256-256q-19-19-19-45v-486l-493-493q-31-29-14-70 17-39 59-39h1280q42 0 59 39z"/></svg></th><th style="width:120px;height:37px;padding-bottom:0px">Units<svg class="i" width="21" height="21" viewBox="0 0 1792 1792" style="right:32px;top:8px"><path fill="#e2e2e2" d="M1408 1088q0 26-19 45l-448 448q-19 19-45 19t-45-19l-448-448q-19-19-19-45t19-45 45-19h896q26 0 45 19t19 45zm0-384q0 26-19 45t-45 19h-896q-26 0-45-19t-19-45 19-45l448-448q19-19 45-19t45 19l448 448q19 19 19 45z"/></svg><svg class="i" width="24" height="24" viewBox="0 0 1792 1792" style="right:7.3px;top:5.6px"><path fill="#e2e2e2" d="M1595 295q17 41-14 70l-493 493v742q0 42-39 59-13 5-25 5-27 0-45-19l-256-256q-19-19-19-45v-486l-493-493q-31-29-14-70 17-39 59-39h1280q42 0 59 39z"/></svg></th></tr></thead><tbody><tr class="o" style="height:34px"><td class="c"><span class="cb"></span></td><td><a>Td (adult)</a></td><td>04-28-1999 12:07:00</td><td>04-28-2009</td><td>IM</td><td>RA</td><td>4598</td><td>Aventis Pasteur</td><td></td><td></td><td></td><td>cc</td><td></td></tr><tr class="e" style="height:48px"><td class="c"><span class="cb"></span></td><td><a>influenza, live,<br>intranasal</a></td><td>10-11-2011</td><td></td><td></td><td></td><td></td><td></td><td></td><td></td><td></td><td></td><td></td></tr><tr class="o" style="height:34px"><td class="c"><span class="cb"></span></td><td><a>Td (adult)</a></td><td>09-03-2025 16:11:00</td><td></td><td>IM</td><td>LA</td><td>abc123</td><td>Merck and Co., Inc.</td><td></td><td></td><td>1:10</td><td>0.5 mL</td><td></td></tr></tbody></table><div class="er"><span class="cb" style="margin-top:9px"></span></div></div><div class="sb"><svg class="i" style="left:6px;top:4px" width="9" height="12" viewBox="0 0 9 12"><path d="M7.8 1.2 L1.2 6 L7.8 10.8 Z" fill="#8b8b8b" stroke="#8b8b8b" stroke-width="2" stroke-linejoin="round"/></svg><div class="th" style="width:1051px"></div><svg class="i" style="right:6px;top:4px" width="9" height="12" viewBox="0 0 9 12"><path d="M1.2 1.2 L7.8 6 L1.2 10.8 Z" fill="#8b8b8b" stroke="#8b8b8b" stroke-width="2" stroke-linejoin="round"/></svg></div></div><div class="panel" style="top:578px;height:290px"><div class="tb" style="height:39px"><div class="tt" style="margin-top:0px">Vials, <span>5 records</span></div><div class="vs" style="left:127px"></div><svg class="i" width="23" height="23" viewBox="0 0 1792 1792" style="left:141.7px;top:7.7px"><path fill="#0892d6" d="M1664 896q0 156-61 298t-164 245-245 164-298 61q-172 0-327-72.500t-264-204.500q-7-10-6.500-22.500t8.500-20.500l137-138q10-9 25-9 16 2 23 12 73 95 179 147t225 52q104 0 198.500-40.500t163.500-109.500 109.500-163.500 40.500-198.500-40.500-198.500-109.500-163.500-163.500-109.500-198.500-40.500q-98 0-188 35.500t-160 101.500l137 138q31 30 14 69-17 40-59 40h-448q-26 0-45-19t-19-45v-448q0-42 40-59 39-17 69 14l130 129q107-101 244.500-156.500t284.500-55.500q156 0 298 61t245 164 164 245 61 298z"/></svg><svg class="i" width="23" height="23" viewBox="0 0 1792 1792" style="left:168.7px;top:7.9px"><path fill="#f5f5f5" d="M1037 1395l102-102q19-19 19-45t-19-45l-307-307 307-307q19-19 19-45t-19-45l-102-102q-19-19-45-19t-45 19l-454 454q-19 19-19 45t19 45l454 454q19 19 45 19t45-19zm627-499q0 209-103 385.500t-279.500 279.500-385.500 103-385.500-103-279.500-279.500-103-385.500 103-385.500 279.500-279.500 385.500-103 385.500 103 279.500 279.500 103 385.500z"/></svg><svg class="i" width="23" height="23" viewBox="0 0 1792 1792" style="left:196.7px;top:7.9px"><path fill="#f5f5f5" d="M845 1395l454-454q19-19 19-45t-19-45l-454-454q-19-19-45-19t-45 19l-102 102q-19 19-19 45t19 45l307 307-307 307q-19 19-19 45t19 45l102 102q19 19 45 19t45-19zm819-499q0 209-103 385.500t-279.500 279.500-385.500 103-385.500-103-279.500-279.500-103-385.500 103-385.500 279.500-279.500 385.500-103 385.500 103 279.500 279.500 103 385.500z"/></svg><div class="sel" style="left:226px;width:171px;margin-top:0px">Main Perspective<svg width="13" height="9" viewBox="0 0 13 9"><path d="M1.5 1.5 L6.5 6.8 L11.5 1.5" fill="none" stroke="#000" stroke-width="2"/></svg></div><svg class="i" width="23" height="23" viewBox="0 0 1792 1792" style="left:404px;top:8px"><path fill="#0892d6" d="M491 1536l91-91-235-235-91 91v107h128v128h107zm523-928q0-22-22-22-10 0-17 7l-542 542q-7 7-7 17 0 22 22 22 10 0 17-7l542-542q7-7 7-17zm-54-192l416 416-832 832h-416v-416zm683 96q0 53-37 90l-166 166-416-416 166-165q36-38 90-38 53 0 91 38l235 234q37 39 37 91z"/></svg><svg class="i" width="23" height="23" viewBox="0 0 1792 1792" style="left:430px;top:8px"><path fill="#0892d6" d="M704 1376v-704q0-14-9-23t-23-9h-64q-14 0-23 9t-9 23v704q0 14 9 23t23 9h64q14 0 23-9t9-23zm256 0v-704q0-14-9-23t-23-9h-64q-14 0-23 9t-9 23v704q0 14 9 23t23 9h64q14 0 23-9t9-23zm256 0v-704q0-14-9-23t-23-9h-64q-14 0-23 9t-9 23v704q0 14 9 23t23 9h64q14 0 23-9t9-23zm-544-992h448l-48-117q-7-9-17-11h-317q-10 2-17 11zm928 32v64q0 14-9 23t-23 9h-96v948q0 83-47 143.500t-113 60.500h-832q-66 0-113-58.500t-47-141.500v-952h-96q-14 0-23-9t-9-23v-64q0-14 9-23t23-9h309l70-167q15-37 54-63t79-26h320q40 0 79 26t54 63l70 167h309q14 0 23 9t9 23z"/></svg><svg class="i" width="23" height="23" viewBox="0 0 1792 1792" style="left:455px;top:8px"><path fill="#0892d6" d="M640 768h512v-192q0-106-75-181t-181-75-181 75-75 181v192zm832 96v576q0 40-28 68t-68 28h-960q-40 0-68-28t-28-68v-576q0-40 28-68t68-28h32v-192q0-184 132-316t316-132 316 132 132 316v192h32q40 0 68 28t28 68z"/></svg><svg class="i" width="23" height="23" viewBox="0 0 1792 1792" style="left:1538.9px;top:5.6px"><path fill="#0892d6" d="M1596 380q28 28 48 76t20 88v1152q0 40-28 68t-68 28h-1344q-40 0-68-28t-28-68v-1600q0-40 28-68t68-28h896q40 0 88 20t76 48zm-444-244v376h376q-10-29-22-41l-313-313q-12-12-41-22zm384 1528v-1024h-416q-40 0-68-28t-28-68v-416h-768v1536h1280z"/></svg><svg class="i" width="23" height="23" viewBox="0 0 1792 1792" style="left:1575.7px;top:5.6px"><path fill="#0892d6" d="M1639 1056q0 5-1 7-64 268-268 434.500t-478 166.500q-146 0-282.500-55t-243.500-157l-129 129q-19 19-45 19t-45-19-19-45v-448q0-26 19-45t45-19h448q26 0 45 19t19 45-19 45l-137 137q71 66 161 102t187 36q134 0 250-65t186-179q11-17 53-117 8-23 30-23h192q13 0 22.500 9.500t9.500 22.500zm25-800v448q0 26-19 45t-45 19h-448q-26 0-45-19t-19-45 19-45l138-138q-148-137-349-137-134 0-250 65t-186 179q-11 17-53 117-8 23-30 23h-199q-13 0-22.500-9.500t-9.500-22.500v-7q65-268 270-434.500t480-166.500q146 0 284 55.500t245 156.500l130-129q19-19 45-19t45 19 19 45z"/></svg><svg class="i" width="23" height="23" viewBox="0 0 1792 1792" style="left:1614.1px;top:5.6px"><path fill="#0892d6" d="M1152 896q0-106-75-181t-181-75-181 75-75 181 75 181 181 75 181-75 75-181zm512-109v222q0 12-8 23t-20 13l-185 28q-19 54-39 91 35 50 107 138 10 12 10 25t-9 23q-27 37-99 108t-94 71q-12 0-26-9l-138-108q-44 23-91 38-16 136-29 186-7 28-36 28h-222q-14 0-24.500-8.500t-11.500-21.500l-28-184q-49-16-90-37l-141 107q-10 9-25 9-14 0-25-11-126-114-165-168-7-10-7-23 0-12 8-23 15-21 51-66.500t54-70.500q-27-50-41-99l-183-27q-13-2-21-12.500t-8-23.500v-222q0-12 8-23t19-13l186-28q14-46 39-92-40-57-107-138-10-12-10-24 0-10 9-23 26-36 98.500-107.500t94.500-71.500q13 0 26 10l138 107q44-23 91-38 16-136 29-186 7-28 36-28h222q14 0 24.500 8.500t11.500 21.500l28 184q49 16 90 37l142-107q9-9 24-9 13 0 25 10 129 119 165 170 7 8 7 22 0 12-8 23-15 21-51 66.500t-54 70.500q26 50 41 98l183 28q13 2 21 12.500t8 23.500z"/></svg><svg class="i" width="23" height="23" viewBox="0 0 1792 1792" style="left:1651.1px;top:5.6px"><path fill="#0892d6" d="M1683 1331l-166 165q-19 19-45 19t-45-19l-531-531-531 531q-19 19-45 19t-45-19l-166-165q-19-19-19-45.500t19-45.500l742-741q19-19 45-19t45 19l742 741q19 19 19 45.500t-19 45.500z"/></svg></div><div class="tw"><table style="width:1681px"><thead><tr><th class="c" style="height:36px;padding-bottom:2px"><span class="cb"></span></th><th style="width:217px;height:36px;padding-bottom:2px">Vial<svg class="i" width="21" height="21" viewBox="0 0 1792 1792" style="right:32px;top:7px"><path fill="#e2e2e2" d="M1408 1088q0 26-19 45l-448 448q-19 19-45 19t-45-19l-448-448q-19-19-19-45t19-45 45-19h896q26 0 45 19t19 45zm0-384q0 26-19 45t-45 19h-896q-26 0-45-19t-19-45 19-45l448-448q19-19 45-19t45 19l448 448q19 19 19 45z"/></svg><svg class="i" width="24" height="24" viewBox="0 0 1792 1792" style="right:7.3px;top:4.6px"><path fill="#e2e2e2" d="M1595 295q17 41-14 70l-493 493v742q0 42-39 59-13 5-25 5-27 0-45-19l-256-256q-19-19-19-45v-486l-493-493q-31-29-14-70 17-39 59-39h1280q42 0 59 39z"/></svg></th><th style="width:287px;height:36px;padding-bottom:2px">Contents<svg class="i" width="21" height="21" viewBox="0 0 1792 1792" style="right:32px;top:7px"><path fill="#e2e2e2" d="M1408 1088q0 26-19 45l-448 448q-19 19-45 19t-45-19l-448-448q-19-19-19-45t19-45 45-19h896q26 0 45 19t19 45zm0-384q0 26-19 45t-45 19h-896q-26 0-45-19t-19-45 19-45l448-448q19-19 45-19t45 19l448 448q19 19 19 45z"/></svg><svg class="i" width="24" height="24" viewBox="0 0 1792 1792" style="right:7.3px;top:4.6px"><path fill="#e2e2e2" d="M1595 295q17 41-14 70l-493 493v742q0 42-39 59-13 5-25 5-27 0-45-19l-256-256q-19-19-19-45v-486l-493-493q-31-29-14-70 17-39 59-39h1280q42 0 59 39z"/></svg></th><th style="width:281px;height:36px;padding-bottom:2px">Strength<svg class="i" width="21" height="21" viewBox="0 0 1792 1792" style="right:32px;top:7px"><path fill="#e2e2e2" d="M1408 1088q0 26-19 45l-448 448q-19 19-45 19t-45-19l-448-448q-19-19-19-45t19-45 45-19h896q26 0 45 19t19 45zm0-384q0 26-19 45t-45 19h-896q-26 0-45-19t-19-45 19-45l448-448q19-19 45-19t45 19l448 448q19 19 19 45z"/></svg><svg class="i" width="24" height="24" viewBox="0 0 1792 1792" style="right:7.3px;top:4.6px"><path fill="#e2e2e2" d="M1595 295q17 41-14 70l-493 493v742q0 42-39 59-13 5-25 5-27 0-45-19l-256-256q-19-19-19-45v-486l-493-493q-31-29-14-70 17-39 59-39h1280q42 0 59 39z"/></svg></th><th style="width:267px;height:36px;padding-bottom:2px">Expires<svg class="i" width="21" height="21" viewBox="0 0 1792 1792" style="right:32px;top:7px"><path fill="#e2e2e2" d="M1408 1088q0 26-19 45l-448 448q-19 19-45 19t-45-19l-448-448q-19-19-19-45t19-45 45-19h896q26 0 45 19t19 45zm0-384q0 26-19 45t-45 19h-896q-26 0-45-19t-19-45 19-45l448-448q19-19 45-19t45 19l448 448q19 19 19 45z"/></svg><svg class="i" width="24" height="24" viewBox="0 0 1792 1792" style="right:7.3px;top:4.6px"><path fill="#e2e2e2" d="M1595 295q17 41-14 70l-493 493v742q0 42-39 59-13 5-25 5-27 0-45-19l-256-256q-19-19-19-45v-486l-493-493q-31-29-14-70 17-39 59-39h1280q42 0 59 39z"/></svg></th><th style="width:302px;height:36px;padding-bottom:2px">Start Date<svg class="i" width="21" height="21" viewBox="0 0 1792 1792" style="right:32px;top:7px"><path fill="#e2e2e2" d="M1408 1088q0 26-19 45l-448 448q-19 19-45 19t-45-19l-448-448q-19-19-19-45t19-45 45-19h896q26 0 45 19t19 45zm0-384q0 26-19 45t-45 19h-896q-26 0-45-19t-19-45 19-45l448-448q19-19 45-19t45 19l448 448q19 19 19 45z"/></svg><svg class="i" width="24" height="24" viewBox="0 0 1792 1792" style="right:7.3px;top:4.6px"><path fill="#e2e2e2" d="M1595 295q17 41-14 70l-493 493v742q0 42-39 59-13 5-25 5-27 0-45-19l-256-256q-19-19-19-45v-486l-493-493q-31-29-14-70 17-39 59-39h1280q42 0 59 39z"/></svg></th><th style="width:292px;height:36px;padding-bottom:2px">End Date<svg class="i" width="21" height="21" viewBox="0 0 1792 1792" style="right:32px;top:7px"><path fill="#e2e2e2" d="M1408 1088q0 26-19 45l-448 448q-19 19-45 19t-45-19l-448-448q-19-19-19-45t19-45 45-19h896q26 0 45 19t19 45zm0-384q0 26-19 45t-45 19h-896q-26 0-45-19t-19-45 19-45l448-448q19-19 45-19t45 19l448 448q19 19 19 45z"/></svg><svg class="i" width="24" height="24" viewBox="0 0 1792 1792" style="right:7.3px;top:4.6px"><path fill="#e2e2e2" d="M1595 295q17 41-14 70l-493 493v742q0 42-39 59-13 5-25 5-27 0-45-19l-256-256q-19-19-19-45v-486l-493-493q-31-29-14-70 17-39 59-39h1280q42 0 59 39z"/></svg></th></tr></thead><tbody><tr class="o"><td class="c"><span class="cb"></span></td><td>Vial 1 name</td><td>tree grass</td><td>1:100</td><td></td><td></td><td></td></tr><tr class="e"><td class="c"><span class="cb"></span></td><td>Vial 2 name</td><td>cats dogs</td><td>1:10000</td><td></td><td></td><td></td></tr><tr class="o"><td class="c"><span class="cb"></span></td><td>V1-S2</td><td>Red</td><td></td><td>01-15-2026</td><td>01-14-2025</td><td></td></tr><tr class="e"><td class="c"><span class="cb"></span></td><td>V2-S2</td><td>Red</td><td></td><td>01-15-2026</td><td>01-14-2025</td><td></td></tr><tr class="o"><td class="c"><span class="cb"></span></td><td></td><td>A(T)</td><td>1:1</td><td>01-05-2026</td><td>01-14-2025</td><td></td></tr></tbody></table><div class="er"><span class="cb" style="margin-top:9px"></span></div></div></div><div class="panel" style="top:886px;height:640px"><div class="tb" style="height:39px"><div class="tt" style="margin-top:0px">Medication History, <span>6 / 47 records (<u>clear filter</u>)</span></div><div class="vs" style="left:339px"></div><svg class="i" width="23" height="23" viewBox="0 0 1792 1792" style="left:353.7px;top:7.7px"><path fill="#0892d6" d="M1664 896q0 156-61 298t-164 245-245 164-298 61q-172 0-327-72.500t-264-204.500q-7-10-6.500-22.500t8.500-20.500l137-138q10-9 25-9 16 2 23 12 73 95 179 147t225 52q104 0 198.500-40.500t163.500-109.500 109.500-163.500 40.500-198.500-40.500-198.500-109.500-163.500-163.500-109.500-198.500-40.500q-98 0-188 35.500t-160 101.500l137 138q31 30 14 69-17 40-59 40h-448q-26 0-45-19t-19-45v-448q0-42 40-59 39-17 69 14l130 129q107-101 244.500-156.500t284.500-55.500q156 0 298 61t245 164 164 245 61 298z"/></svg><svg class="i" width="23" height="23" viewBox="0 0 1792 1792" style="left:380.7px;top:7.9px"><path fill="#f5f5f5" d="M1037 1395l102-102q19-19 19-45t-19-45l-307-307 307-307q19-19 19-45t-19-45l-102-102q-19-19-45-19t-45 19l-454 454q-19 19-19 45t19 45l454 454q19 19 45 19t45-19zm627-499q0 209-103 385.500t-279.500 279.500-385.500 103-385.500-103-279.500-279.500-103-385.500 103-385.500 279.500-279.500 385.500-103 385.500 103 279.500 279.500 103 385.500z"/></svg><svg class="i" width="23" height="23" viewBox="0 0 1792 1792" style="left:408.7px;top:7.9px"><path fill="#f5f5f5" d="M845 1395l454-454q19-19 19-45t-19-45l-454-454q-19-19-45-19t-45 19l-102 102q-19 19-19 45t19 45l307 307-307 307q-19 19-19 45t19 45l102 102q19 19 45 19t45-19zm819-499q0 209-103 385.500t-279.500 279.500-385.500 103-385.500-103-279.500-279.500-103-385.500 103-385.500 279.500-279.500 385.500-103 385.500 103 279.500 279.500 103 385.500z"/></svg><div class="sel" style="left:438px;width:240px;margin-top:0px">Active<svg width="13" height="9" viewBox="0 0 13 9"><path d="M1.5 1.5 L6.5 6.8 L11.5 1.5" fill="none" stroke="#000" stroke-width="2"/></svg></div><svg class="i" width="23" height="23" viewBox="0 0 1792 1792" style="left:685px;top:8px"><path fill="#0892d6" d="M512 1536h768v-384h-768v384zm896 0h128v-896q0-14-10-38.500t-20-34.500l-281-281q-10-10-34-20t-39-10v416q0 40-28 68t-68 28h-576q-40 0-68-28t-28-68v-416h-128v1280h128v-416q0-40 28-68t68-28h832q40 0 68 28t28 68v416zm-384-928v-320q0-13-9.500-22.500t-22.500-9.500h-192q-13 0-22.500 9.500t-9.500 22.500v320q0 13 9.500 22.500t22.500 9.500h192q13 0 22.500-9.500t9.500-22.500zm640 32v928q0 40-28 68t-68 28h-1344q-40 0-68-28t-28-68v-1344q0-40 28-68t68-28h928q40 0 88 20t76 48l280 280q28 28 48 76t20 88z"/></svg><svg class="i" width="23" height="23" viewBox="0 0 1792 1792" style="left:710px;top:8px"><path fill="#0892d6" d="M640 768h512v-192q0-106-75-181t-181-75-181 75-75 181v192zm832 96v576q0 40-28 68t-68 28h-960q-40 0-68-28t-28-68v-576q0-40 28-68t68-28h32v-192q0-184 132-316t316-132 316 132 132 316v192h32q40 0 68 28t28 68z"/></svg><svg class="i" width="23" height="23" viewBox="0 0 1792 1792" style="left:1538.9px;top:5.6px"><path fill="#0892d6" d="M1596 380q28 28 48 76t20 88v1152q0 40-28 68t-68 28h-1344q-40 0-68-28t-28-68v-1600q0-40 28-68t68-28h896q40 0 88 20t76 48zm-444-244v376h376q-10-29-22-41l-313-313q-12-12-41-22zm384 1528v-1024h-416q-40 0-68-28t-28-68v-416h-768v1536h1280z"/></svg><svg class="i" width="23" height="23" viewBox="0 0 1792 1792" style="left:1575.7px;top:5.6px"><path fill="#0892d6" d="M1639 1056q0 5-1 7-64 268-268 434.500t-478 166.500q-146 0-282.500-55t-243.500-157l-129 129q-19 19-45 19t-45-19-19-45v-448q0-26 19-45t45-19h448q26 0 45 19t19 45-19 45l-137 137q71 66 161 102t187 36q134 0 250-65t186-179q11-17 53-117 8-23 30-23h192q13 0 22.500 9.500t9.500 22.500zm25-800v448q0 26-19 45t-45 19h-448q-26 0-45-19t-19-45 19-45l138-138q-148-137-349-137-134 0-250 65t-186 179q-11 17-53 117-8 23-30 23h-199q-13 0-22.500-9.500t-9.500-22.500v-7q65-268 270-434.500t480-166.500q146 0 284 55.500t245 156.500l130-129q19-19 45-19t45 19 19 45z"/></svg><svg class="i" width="23" height="23" viewBox="0 0 1792 1792" style="left:1614.1px;top:5.6px"><path fill="#0892d6" d="M1152 896q0-106-75-181t-181-75-181 75-75 181 75 181 181 75 181-75 75-181zm512-109v222q0 12-8 23t-20 13l-185 28q-19 54-39 91 35 50 107 138 10 12 10 25t-9 23q-27 37-99 108t-94 71q-12 0-26-9l-138-108q-44 23-91 38-16 136-29 186-7 28-36 28h-222q-14 0-24.500-8.500t-11.500-21.500l-28-184q-49-16-90-37l-141 107q-10 9-25 9-14 0-25-11-126-114-165-168-7-10-7-23 0-12 8-23 15-21 51-66.500t54-70.500q-27-50-41-99l-183-27q-13-2-21-12.500t-8-23.500v-222q0-12 8-23t19-13l186-28q14-46 39-92-40-57-107-138-10-12-10-24 0-10 9-23 26-36 98.500-107.500t94.500-71.500q13 0 26 10l138 107q44-23 91-38 16-136 29-186 7-28 36-28h222q14 0 24.500 8.500t11.500 21.500l28 184q49 16 90 37l142-107q9-9 24-9 13 0 25 10 129 119 165 170 7 8 7 22 0 12-8 23-15 21-51 66.500t-54 70.500q26 50 41 98l183 28q13 2 21 12.500t8 23.500z"/></svg><svg class="i" width="23" height="23" viewBox="0 0 1792 1792" style="left:1651.1px;top:5.6px"><path fill="#0892d6" d="M1683 808l-742 741q-19 19-45 19t-45-19l-742-741q-19-19-19-45.500t19-45.500l166-165q19-19 45-19t45 19l531 531 531-531q19-19 45-19t45 19l166 165q19 19 19 45.500t-19 45.500z"/></svg></div><div class="tw" style="height:571px"><table style="width:1856px"><thead><tr><th class="f" style="width:138px;height:37px;padding-bottom:2px">Status<svg class="i" width="21" height="21" viewBox="0 0 1792 1792" style="right:32px;top:7px"><path fill="#e2e2e2" d="M1408 1088q0 26-19 45l-448 448q-19 19-45 19t-45-19l-448-448q-19-19-19-45t19-45 45-19h896q26 0 45 19t19 45zm0-384q0 26-19 45t-45 19h-896q-26 0-45-19t-19-45 19-45l448-448q19-19 45-19t45 19l448 448q19 19 19 45z"/></svg><svg class="i" width="24" height="24" viewBox="0 0 1792 1792" style="right:7.3px;top:4.6px"><path fill="#e2e2e2" d="M1595 295q17 41-14 70l-493 493v742q0 42-39 59-13 5-25 5-27 0-45-19l-256-256q-19-19-19-45v-486l-493-493q-31-29-14-70 17-39 59-39h1280q42 0 59 39z"/></svg></th><th style="width:167px;height:37px;padding-bottom:2px">Start Date<svg class="i" width="21" height="21" viewBox="0 0 1792 1792" style="right:32px;top:7px"><path fill="#e2e2e2" d="M1408 1088q0 26-19 45l-448 448q-19 19-45 19t-45-19l-448-448q-19-19-19-45t19-45 45-19h896q26 0 45 19t19 45zm0-384q0 26-19 45t-45 19h-896q-26 0-45-19t-19-45 19-45l448-448q19-19 45-19t45 19l448 448q19 19 19 45z"/></svg><svg class="i" width="24" height="24" viewBox="0 0 1792 1792" style="right:7.3px;top:4.6px"><path fill="#e2e2e2" d="M1595 295q17 41-14 70l-493 493v742q0 42-39 59-13 5-25 5-27 0-45-19l-256-256q-19-19-19-45v-486l-493-493q-31-29-14-70 17-39 59-39h1280q42 0 59 39z"/></svg></th><th style="width:162px;height:37px;padding-bottom:2px">End Date<svg class="i" width="21" height="21" viewBox="0 0 1792 1792" style="right:32px;top:7px"><path fill="#e2e2e2" d="M1408 1088q0 26-19 45l-448 448q-19 19-45 19t-45-19l-448-448q-19-19-19-45t19-45 45-19h896q26 0 45 19t19 45zm0-384q0 26-19 45t-45 19h-896q-26 0-45-19t-19-45 19-45l448-448q19-19 45-19t45 19l448 448q19 19 19 45z"/></svg><svg class="i" width="24" height="24" viewBox="0 0 1792 1792" style="right:7.3px;top:4.6px"><path fill="#e2e2e2" d="M1595 295q17 41-14 70l-493 493v742q0 42-39 59-13 5-25 5-27 0-45-19l-256-256q-19-19-19-45v-486l-493-493q-31-29-14-70 17-39 59-39h1280q42 0 59 39z"/></svg></th><th style="width:176px;height:37px;padding-bottom:2px">Drug Name<svg class="i" width="21" height="21" viewBox="0 0 1792 1792" style="right:32px;top:7px"><path fill="#e2e2e2" d="M1408 1088q0 26-19 45l-448 448q-19 19-45 19t-45-19l-448-448q-19-19-19-45t19-45 45-19h896q26 0 45 19t19 45zm0-384q0 26-19 45t-45 19h-896q-26 0-45-19t-19-45 19-45l448-448q19-19 45-19t45 19l448 448q19 19 19 45z"/></svg><svg class="i" width="24" height="24" viewBox="0 0 1792 1792" style="right:7.3px;top:4.6px"><path fill="#e2e2e2" d="M1595 295q17 41-14 70l-493 493v742q0 42-39 59-13 5-25 5-27 0-45-19l-256-256q-19-19-19-45v-486l-493-493q-31-29-14-70 17-39 59-39h1280q42 0 59 39z"/></svg></th><th style="width:199px;height:37px;padding-bottom:2px">Generic Name<svg class="i" width="21" height="21" viewBox="0 0 1792 1792" style="right:32px;top:7px"><path fill="#e2e2e2" d="M1408 1088q0 26-19 45l-448 448q-19 19-45 19t-45-19l-448-448q-19-19-19-45t19-45 45-19h896q26 0 45 19t19 45zm0-384q0 26-19 45t-45 19h-896q-26 0-45-19t-19-45 19-45l448-448q19-19 45-19t45 19l448 448q19 19 19 45z"/></svg><svg class="i" width="24" height="24" viewBox="0 0 1792 1792" style="right:7.3px;top:4.6px"><path fill="#e2e2e2" d="M1595 295q17 41-14 70l-493 493v742q0 42-39 59-13 5-25 5-27 0-45-19l-256-256q-19-19-19-45v-486l-493-493q-31-29-14-70 17-39 59-39h1280q42 0 59 39z"/></svg></th><th style="width:117px;height:37px;padding-bottom:2px">Sig<svg class="i" width="21" height="21" viewBox="0 0 1792 1792" style="right:32px;top:7px"><path fill="#e2e2e2" d="M1408 1088q0 26-19 45l-448 448q-19 19-45 19t-45-19l-448-448q-19-19-19-45t19-45 45-19h896q26 0 45 19t19 45zm0-384q0 26-19 45t-45 19h-896q-26 0-45-19t-19-45 19-45l448-448q19-19 45-19t45 19l448 448q19 19 19 45z"/></svg><svg class="i" width="24" height="24" viewBox="0 0 1792 1792" style="right:7.3px;top:4.6px"><path fill="#e2e2e2" d="M1595 295q17 41-14 70l-493 493v742q0 42-39 59-13 5-25 5-27 0-45-19l-256-256q-19-19-19-45v-486l-493-493q-31-29-14-70 17-39 59-39h1280q42 0 59 39z"/></svg></th><th style="width:155px;height:37px;padding-bottom:2px">Quantity<svg class="i" width="21" height="21" viewBox="0 0 1792 1792" style="right:32px;top:7px"><path fill="#e2e2e2" d="M1408 1088q0 26-19 45l-448 448q-19 19-45 19t-45-19l-448-448q-19-19-19-45t19-45 45-19h896q26 0 45 19t19 45zm0-384q0 26-19 45t-45 19h-896q-26 0-45-19t-19-45 19-45l448-448q19-19 45-19t45 19l448 448q19 19 19 45z"/></svg><svg class="i" width="24" height="24" viewBox="0 0 1792 1792" style="right:7.3px;top:4.6px"><path fill="#e2e2e2" d="M1595 295q17 41-14 70l-493 493v742q0 42-39 59-13 5-25 5-27 0-45-19l-256-256q-19-19-19-45v-486l-493-493q-31-29-14-70 17-39 59-39h1280q42 0 59 39z"/></svg></th><th style="width:138px;height:37px;padding-bottom:2px">Refills<svg class="i" width="21" height="21" viewBox="0 0 1792 1792" style="right:32px;top:7px"><path fill="#e2e2e2" d="M1408 1088q0 26-19 45l-448 448q-19 19-45 19t-45-19l-448-448q-19-19-19-45t19-45 45-19h896q26 0 45 19t19 45zm0-384q0 26-19 45t-45 19h-896q-26 0-45-19t-19-45 19-45l448-448q19-19 45-19t45 19l448 448q19 19 19 45z"/></svg><svg class="i" width="24" height="24" viewBox="0 0 1792 1792" style="right:7.3px;top:4.6px"><path fill="#e2e2e2" d="M1595 295q17 41-14 70l-493 493v742q0 42-39 59-13 5-25 5-27 0-45-19l-256-256q-19-19-19-45v-486l-493-493q-31-29-14-70 17-39 59-39h1280q42 0 59 39z"/></svg></th><th style="width:172px;height:37px;padding-bottom:2px">Comments<svg class="i" width="21" height="21" viewBox="0 0 1792 1792" style="right:32px;top:7px"><path fill="#e2e2e2" d="M1408 1088q0 26-19 45l-448 448q-19 19-45 19t-45-19l-448-448q-19-19-19-45t19-45 45-19h896q26 0 45 19t19 45zm0-384q0 26-19 45t-45 19h-896q-26 0-45-19t-19-45 19-45l448-448q19-19 45-19t45 19l448 448q19 19 19 45z"/></svg><svg class="i" width="24" height="24" viewBox="0 0 1792 1792" style="right:7.3px;top:4.6px"><path fill="#e2e2e2" d="M1595 295q17 41-14 70l-493 493v742q0 42-39 59-13 5-25 5-27 0-45-19l-256-256q-19-19-19-45v-486l-493-493q-31-29-14-70 17-39 59-39h1280q42 0 59 39z"/></svg></th><th style="width:172px;height:37px;padding-bottom:2px">Entered by<svg class="i" width="21" height="21" viewBox="0 0 1792 1792" style="right:32px;top:7px"><path fill="#e2e2e2" d="M1408 1088q0 26-19 45l-448 448q-19 19-45 19t-45-19l-448-448q-19-19-19-45t19-45 45-19h896q26 0 45 19t19 45zm0-384q0 26-19 45t-45 19h-896q-26 0-45-19t-19-45 19-45l448-448q19-19 45-19t45 19l448 448q19 19 19 45z"/></svg><svg class="i" width="24" height="24" viewBox="0 0 1792 1792" style="right:7.3px;top:4.6px"><path fill="#e2e2e2" d="M1595 295q17 41-14 70l-493 493v742q0 42-39 59-13 5-25 5-27 0-45-19l-256-256q-19-19-19-45v-486l-493-493q-31-29-14-70 17-39 59-39h1280q42 0 59 39z"/></svg></th><th style="width:260px;height:37px;padding-bottom:2px">Therapeutic Class<svg class="i" width="21" height="21" viewBox="0 0 1792 1792" style="right:32px;top:7px"><path fill="#e2e2e2" d="M1408 1088q0 26-19 45l-448 448q-19 19-45 19t-45-19l-448-448q-19-19-19-45t19-45 45-19h896q26 0 45 19t19 45zm0-384q0 26-19 45t-45 19h-896q-26 0-45-19t-19-45 19-45l448-448q19-19 45-19t45 19l448 448q19 19 19 45z"/></svg><svg class="i" width="24" height="24" viewBox="0 0 1792 1792" style="right:7.3px;top:4.6px"><path fill="#e2e2e2" d="M1595 295q17 41-14 70l-493 493v742q0 42-39 59-13 5-25 5-27 0-45-19l-256-256q-19-19-19-45v-486l-493-493q-31-29-14-70 17-39 59-39h1280q42 0 59 39z"/></svg></th></tr></thead><tbody><tr class="o" style="height:67px"><td class="f">Active</td><td>09-03-2025</td><td></td><td><a>amoxicillin-pot<br>clavulanate 875-<br>125mg</a></td><td>amoxicillin-pot<br>clavulanate</td><td>take 1 tablet<br>twice daily</td><td>1 tablet(s)</td><td class="r">0</td><td></td><td>Medical Informatics<br>Engineering, MIE</td><td>Anti-Infective Agents</td></tr><tr class="e" style="height:86px"><td class="f">Active</td><td>08-25-2010</td><td></td><td><a>Aspirin Oral 81mg</a></td><td>aspirin</td><td>1 tablet every<br>day</td><td></td><td class="r">0</td><td>Refilled until: 2010-<br>09-25<br>Refilled on: 2010-08-<br>26,2010-08-25,</td><td>Sample, Michael</td><td>Analgesic, Anti-inflammatory<br>or Antipyretic</td></tr><tr class="o" style="height:48px"><td class="f">Active</td><td></td><td></td><td><a>Calcium 500mg</a></td><td>calcium carbonate</td><td>1 tablet bid</td><td></td><td class="r">0</td><td></td><td>Sample, Michael</td><td></td></tr><tr class="e" style="height:67px"><td class="f">Active</td><td></td><td></td><td><a>Coumadin 5mg</a></td><td>warfarin</td><td>1 tablet M-<br>Sat, 1/2 tablet<br>Sun</td><td></td><td class="r">11</td><td></td><td>Sample, Michael</td><td></td></tr><tr class="o" style="height:181px"><td class="f">Active</td><td>12/14/2009</td><td></td><td><a>Lasix 20mg</a></td><td>furosemide</td><td>1 tablet po<br>weekly;Repeat<br>Lasix on<br>12/14/09; Take<br>Lasix on<br>12/15/09; take<br>if weight<br>greater than<br>149 pounds</td><td></td><td class="r">0</td><td></td><td>Sample, Michael</td><td>Cardiovascular<br>Agents</td></tr><tr class="e" style="height:85px"><td class="f">Active</td><td></td><td></td><td><a>Lisinopril 10mg</a></td><td>lisinopril</td><td>1 tablets every<br>day</td><td>60 tablet(s)</td><td class="r">11</td><td>Refilled until: 2010-<br>07-01<br>Refilled on: 2009-07-<br>06,</td><td>Sample, Michael</td><td>Cardiovascular<br>Agents</td></tr></tbody></table></div><div style="height:10px;background:#f6f6f8"></div><div class="sb"><svg class="i" style="left:6px;top:4px" width="9" height="12" viewBox="0 0 9 12"><path d="M7.8 1.2 L1.2 6 L7.8 10.8 Z" fill="#8b8b8b" stroke="#8b8b8b" stroke-width="2" stroke-linejoin="round"/></svg><div class="th" style="width:1268px"></div><svg class="i" style="right:6px;top:4px" width="9" height="12" viewBox="0 0 9 12"><path d="M1.2 1.2 L7.8 6 L1.2 10.8 Z" fill="#8b8b8b" stroke="#8b8b8b" stroke-width="2" stroke-linejoin="round"/></svg></div></div></body></html>
